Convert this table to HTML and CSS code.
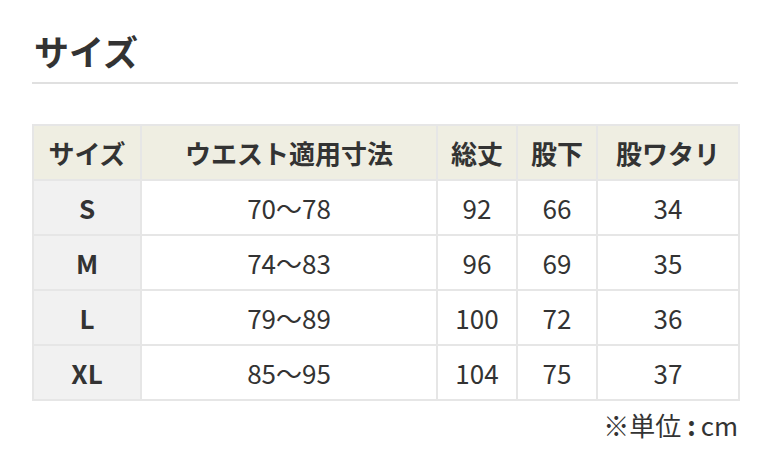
FILE: index.html
```html
<!DOCTYPE html>
<html lang="ja">
<head>
<meta charset="utf-8">
<link rel="stylesheet" href="styles.css">
</head>
<body>
<div class="page">
  <h2 class="title">サイズ</h2>
  <table class="size-table">
    <colgroup>
      <col class="c1"><col class="c2"><col class="c3"><col class="c4"><col class="c5">
    </colgroup>
    <thead>
      <tr><th>サイズ</th><th>ウエスト適用寸法</th><th>総丈</th><th>股下</th><th>股ワタリ</th></tr>
    </thead>
    <tbody>
      <tr><th>S</th><td>70～78</td><td>92</td><td>66</td><td>34</td></tr>
      <tr><th>M</th><td>74～83</td><td>96</td><td>69</td><td>35</td></tr>
      <tr><th>L</th><td>79～89</td><td>100</td><td>72</td><td>36</td></tr>
      <tr><th>XL</th><td>85～95</td><td>104</td><td>75</td><td>37</td></tr>
    </tbody>
  </table>
  <p class="unit">※単位<span class="colon">:</span>cm</p>
</div>
</body>
</html>
```

FILE: styles.css
```css
* { box-sizing: border-box; }
html, body { margin: 0; padding: 0; background: #fff; }
body {
  font-family: "Noto Sans CJK JP", "Noto Sans", sans-serif;
  color: #333;
}
.page {
  padding: 24px 39px 0 32px;
}
.title {
  margin: 0;
  font-size: 35px;
  font-weight: 700;
  line-height: 54px;
  padding: 0 0 4px 2px;
  border-bottom: 2px solid #e0e0e0;
  color: #333;
}
.size-table {
  margin-top: 40px;
  width: 706px;
  border-collapse: collapse;
  table-layout: fixed;
}
.c1 { width: 108px; }
.c2 { width: 296px; }
.c3 { width: 80px; }
.c4 { width: 80px; }
.c5 { width: 142px; }
.size-table th, .size-table td {
  border: 2px solid #e6e6e6;
  height: 55px;
  padding: 0;
  text-align: center;
  vertical-align: middle;
  font-size: 26px;
  line-height: 1;
}
.size-table thead th {
  background: #efeee2;
  font-weight: 700;
}
.size-table tbody th {
  background: #f1f1f1;
  font-weight: 700;
}
.size-table td {
  font-weight: 400;
  background: #fff;
}
.unit {
  margin: 8px 0 0;
  text-align: right;
  font-size: 26px;
  line-height: 32px;
}
.colon {
  font-weight: 700;
  margin: 0 5px 0 6px;
}
```
